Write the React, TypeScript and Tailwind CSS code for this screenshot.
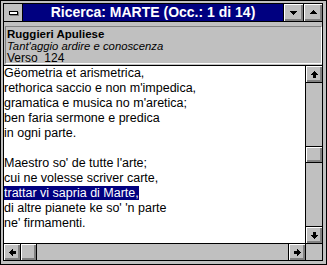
import React from "react";

const Px = ({ rects, rot }: { rects: number[][]; rot: string }) => (
  <svg width="7" height="7" viewBox="0 0 7 7" shapeRendering="crispEdges" className={rot}>
    {rects.map((r, i) => (
      <rect key={i} x={r[0]} y={r[1]} width={r[2]} height={r[3]} fill="#000" />
    ))}
  </svg>
);

const arrowRects = [
  [3, 0, 1, 1],
  [2, 1, 3, 1],
  [1, 2, 5, 1],
  [0, 3, 7, 1],
  [2, 4, 3, 3],
];

const triUp = [
  [3, 1, 1, 1],
  [2, 2, 3, 1],
  [1, 3, 5, 1],
  [0, 4, 7, 1],
];

const bevel = "bg-[#c0c0c0] shadow-[inset_1px_1px_0_#ffffff,inset_-1px_-1px_0_#808080,inset_-2px_-2px_0_#808080]";

const lines = [
  "Gëometria et arismetrica,",
  "rethorica saccio e non m'impedica,",
  "gramatica e musica no m'aretica;",
  "ben faria sermone e predica",
  "in ogni parte.",
  "",
  "Maestro so' de tutte l'arte;",
  "cui ne volesse scriver carte,",
  "HL",
  "di altre pianete ke so' 'n parte",
  "ne' firmamenti.",
];

export default function App() {
  return (
    <div className="w-[327px] h-[265px] bg-[#c0c0c0] border border-black pt-[2px] pl-[2px] pr-[3px] pb-[3px] font-['Liberation_Sans',Arial,sans-serif] text-black">
      <div className="h-full border border-black flex flex-col">
        {/* title bar */}
        <div className="h-[18px] shrink-0 flex border-b border-black">
          <div className="w-[19px] border-r border-black bg-[#c0c0c0] flex items-center justify-center">
            <div className="w-[9px] h-[4px] bg-white border border-black shadow-[1px_1px_0_#808080]" />
          </div>
          <div className="flex-1 bg-[#000080] text-white font-bold text-[14px] leading-[17px] text-center whitespace-pre">
            Ricerca: MARTE (Occ.: 1 di 14)
          </div>
          <div className={`w-[20px] border-l border-black flex items-center justify-center ${bevel}`}>
            <Px rects={triUp} rot="rotate-180" />
          </div>
          <div className={`w-[19px] border-l border-black flex items-center justify-center ${bevel}`}>
            <Px rects={triUp} rot="" />
          </div>
        </div>

        {/* info panel */}
        <div className="h-[44px] shrink-0 border-b border-black pt-[4px] pl-[1px]">
          <div className="h-[38px] border-t border-l border-[#808080] border-r-white border-b-white border-r border-b pl-[1px] pt-[1px]">
            <div className="text-[11.5px] font-bold leading-[12px]">Ruggieri Apuliese</div>
            <div className="text-[11.3px] italic leading-[12px]">Tant'aggio ardire e conoscenza</div>
            <div className="text-[12px] leading-[12px] whitespace-pre">Verso  124</div>
          </div>
        </div>

        {/* text area + vertical scrollbar */}
        <div className="flex-1 min-h-0 flex border-b border-black">
          <div className="flex-1 bg-white border-r border-black overflow-hidden text-[12.5px] leading-[15px] whitespace-pre">
            {lines.map((l, i) =>
              l === "HL" ? (
                <div key={i}>
                  <span className="bg-[#000080] text-white">trattar vi sapria di Marte,</span>
                </div>
              ) : (
                <div key={i} className="h-[15px]">{l}</div>
              )
            )}
          </div>
          <div className="w-[16px] flex flex-col">
            <div className={`h-[17px] border-b border-black flex items-center justify-center ${bevel}`}>
              <Px rects={arrowRects} rot="" />
            </div>
            <div className="flex-1 bg-[#c0c0c0] pt-[63px]">
              <div className="h-[17px] border-y border-black">
                <div className={`h-full ${bevel}`} />
              </div>
            </div>
            <div className={`h-[17px] border-t border-black flex items-center justify-center ${bevel}`}>
              <Px rects={arrowRects} rot="rotate-180" />
            </div>
          </div>
        </div>

        {/* horizontal scrollbar */}
        <div className="h-[16px] shrink-0 flex">
          <div className={`w-[17px] border-r border-black flex items-center justify-center ${bevel}`}>
            <Px rects={arrowRects} rot="-rotate-90" />
          </div>
          <div className="w-[16px] border-r border-black">
            <div className={`h-full ${bevel}`} />
          </div>
          <div className="flex-1 bg-[#c0c0c0]" />
          <div className={`w-[18px] border-x border-black flex items-center justify-center ${bevel}`}>
            <Px rects={arrowRects} rot="rotate-90" />
          </div>
          <div className="w-[16px] bg-[#c0c0c0]" />
        </div>
      </div>
    </div>
  );
}
